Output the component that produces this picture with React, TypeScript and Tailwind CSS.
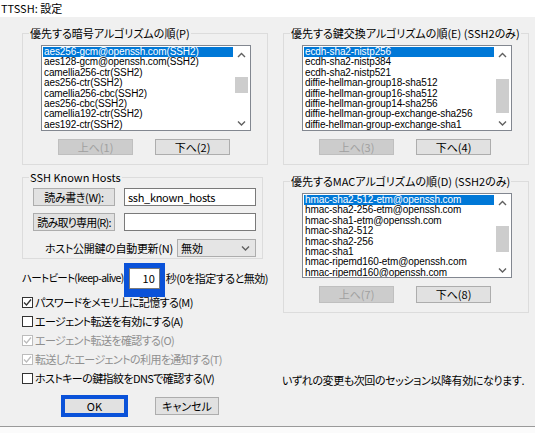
import type { ReactNode } from "react"
import clsx from "clsx"

const ciphers = [
  "aes256-gcm@openssh.com(SSH2)",
  "aes128-gcm@openssh.com(SSH2)",
  "camellia256-ctr(SSH2)",
  "aes256-ctr(SSH2)",
  "camellia256-cbc(SSH2)",
  "aes256-cbc(SSH2)",
  "camellia192-ctr(SSH2)",
  "aes192-ctr(SSH2)",
]

const kexes = [
  "ecdh-sha2-nistp256",
  "ecdh-sha2-nistp384",
  "ecdh-sha2-nistp521",
  "diffie-hellman-group18-sha512",
  "diffie-hellman-group16-sha512",
  "diffie-hellman-group14-sha256",
  "diffie-hellman-group-exchange-sha256",
  "diffie-hellman-group-exchange-sha1",
]

const macs = [
  "hmac-sha2-512-etm@openssh.com",
  "hmac-sha2-256-etm@openssh.com",
  "hmac-sha1-etm@openssh.com",
  "hmac-sha2-512",
  "hmac-sha2-256",
  "hmac-sha1",
  "hmac-ripemd160-etm@openssh.com",
  "hmac-ripemd160@openssh.com",
]

// Windows group box: border with the caption sitting on the top line.
function Group({ label, className, children }: { label: string; className?: string; children: ReactNode }) {
  return (
    <fieldset className={clsx("border border-[#dcdcdc]", className)}>
      <legend className="ml-[6px] px-[1px] text-[11px] leading-[12px] whitespace-nowrap">{label}</legend>
      {children}
    </fieldset>
  )
}

function Chevron({ down }: { down?: boolean }) {
  return (
    <svg width="9" height="6" viewBox="0 0 9 6" className="block">
      <polyline
        points={down ? "1,1.5 4.5,5 8,1.5" : "1,5 4.5,1.5 8,5"}
        fill="none"
        stroke="#606060"
        strokeWidth="1.4"
      />
    </svg>
  )
}

function ListBox({ items, className, thumbTop, thumbH }: { items: string[]; className: string; thumbTop: number; thumbH: number }) {
  return (
    <div className={clsx("flex w-[210px] border border-[#828790] bg-white", className)}>
      <div className="flex-1 overflow-hidden pt-[1px] pl-[1px] font-['Liberation_Sans',sans-serif] text-[10px] tracking-[-0.1px]">
        {items.map((it, i) => (
          <div
            key={it}
            className={clsx(
              "h-[10.4px] leading-[10.4px] pl-[1px] whitespace-nowrap",
              i === 0 ? "bg-[#0078d7] text-white" : "text-black",
            )}
          >
            {it}
          </div>
        ))}
      </div>
      <div className="w-[17px] flex flex-col items-center">
        <div className="h-[17px] flex items-center justify-center">
          <Chevron />
        </div>
        <div className="flex-1 w-full px-[1px]">
          <div className="w-[13px] mx-auto bg-[#cdcdcd]" style={{ marginTop: thumbTop - 17, height: thumbH }} />
        </div>
        <div className="h-[15px] flex items-center justify-center">
          <Chevron down />
        </div>
      </div>
    </div>
  )
}

function Btn({ children, disabled, className }: { children: ReactNode; disabled?: boolean; className?: string }) {
  return (
    <div
      className={clsx(
        "flex items-center justify-center border text-[11px] leading-none whitespace-nowrap",
        disabled ? "bg-[#cccccc] border-[#bfbfbf] text-[#a0a0a0]" : "bg-[#e1e1e1] border-[#adadad] text-black",
        className,
      )}
    >
      {children}
    </div>
  )
}

function Check({ label, checked, disabled }: { label: string; checked?: boolean; disabled?: boolean }) {
  const c = disabled ? "#bcbcbc" : "#333333"
  return (
    <div className="h-[19px] flex items-center">
      <div
        className={clsx(
          "w-[11px] h-[11px] border bg-white flex items-center justify-center",
          disabled ? "border-[#bcbcbc]" : "border-[#333333]",
        )}
      >
        {checked && (
          <svg width="9" height="9" viewBox="0 0 9 9" className="block">
            <polyline points="1,4.5 3.5,7 8,1.5" fill="none" stroke={c} strokeWidth="1.3" />
          </svg>
        )}
      </div>
      <span
        className={clsx(
          "ml-[2px] text-[11px] leading-none tracking-[-0.6px] whitespace-nowrap",
          disabled ? "text-[#8f8f8f]" : "text-black",
        )}
      >
        {label}
      </span>
    </div>
  )
}

function AlgoGroup({
  label,
  items,
  up,
  down,
  listH,
  btnH,
  thumbTop,
  thumbH,
  className,
}: {
  label: string
  items: string[]
  up: string
  down: string
  listH: string
  btnH: string
  thumbTop: number
  thumbH: number
  className?: string
}) {
  return (
    <Group label={label} className={className}>
      <div className="pl-[18px] pt-[6px] pb-[9px]">
        <ListBox items={items} className={listH} thumbTop={thumbTop} thumbH={thumbH} />
        <div className="flex gap-[22px] ml-[17px] mt-[8px]">
          <Btn disabled className={clsx("w-[75px]", btnH)}>{up}</Btn>
          <Btn className={clsx("w-[75px]", btnH)}>{down}</Btn>
        </div>
      </div>
    </Group>
  )
}

export default function App() {
  return (
    <div className="w-[535px] h-[433px] flex flex-col overflow-hidden bg-[#fbfbfb] text-black font-['Noto_Sans_CJK_JP',sans-serif] [font-feature-settings:'palt']">
      <div className="h-[17px] bg-white pl-[1px] text-[11px] leading-[17px]">TTSSH: 設定</div>

      <div className="h-[410px] bg-[#f0f0f0] border-b border-[#9a9a9a] flex pl-[22px] pt-[10px]">
        {/* left column */}
        <div className="w-[246px] flex flex-col">
          <AlgoGroup
            label="優先する暗号アルゴリズムの順(P)"
            items={ciphers}
            up="上へ(1)"
            down="下へ(2)"
            listH="h-[86px]"
            btnH="h-[16px]"
            thumbTop={31}
            thumbH={16}
          />

          <Group label="SSH Known Hosts" className="w-[241px] mt-[6px]">
            <div className="pl-[10px] pr-[6px] pt-[5px] pb-[1px] text-[11px]">
              <div className="flex gap-[9px] h-[18px]">
                <Btn className="w-[82px] tracking-[-0.4px]">読み書き(W):</Btn>
                <div className="flex-1 border border-[#7a7a7a] bg-white pl-[3px] flex items-center leading-none tracking-[-0.3px]">
                  ssh_known_hosts
                </div>
              </div>
              <div className="flex gap-[9px] h-[18px] mt-[7px]">
                <Btn className="w-[82px] tracking-[-0.8px]">読み取り専用(R):</Btn>
                <div className="flex-1 border border-[#7a7a7a] bg-white" />
              </div>
              <div className="flex items-center h-[18px] mt-[8px] pl-[12px]">
                <span className="leading-none tracking-[-0.3px] whitespace-nowrap">ホスト公開鍵の自動更新(N)</span>
                <div className="ml-auto w-[79px] h-full border border-[#adadad] bg-[#e5e5e5] flex items-center justify-between pl-[3px] pr-[5px] leading-none">
                  <span>無効</span>
                  <Chevron down />
                </div>
              </div>
            </div>
          </Group>

          <div className="flex items-center h-[21px] mt-[9px] text-[11px] leading-none whitespace-nowrap">
            <span className="w-[114px] text-[10.5px] tracking-[-0.7px]">ハートビート(keep-alive)</span>
            <div className="relative w-[33px] h-full border border-[#7a7a7a] bg-white flex items-center justify-end pr-[4px]">
              10
              {/* blue annotation frame */}
              <div className="absolute -left-[6px] -top-[6px] -right-[6px] -bottom-[9px] border-[5px] border-b-[8px] border-[#0a52d9]" />
            </div>
            <span className="ml-[6px] tracking-[-0.5px]">秒(0を指定すると無効)</span>
          </div>

          <div className="mt-[4px] flex flex-col">
            <Check label="パスワードをメモリ上に記憶する(M)" checked />
            <Check label="エージェント転送を有効にする(A)" />
            <Check label="エージェント転送を確認する(O)" checked disabled />
            <Check label="転送したエージェントの利用を通知する(T)" checked disabled />
            <Check label="ホストキーの鍵指紋をDNSで確認する(V)" />
          </div>

          <div className="flex mt-[9px] pl-[41px]">
            <div className="relative">
              <Btn className="w-[63px] h-[18px]">OK</Btn>
              <div className="absolute -inset-[2px] border-[4px] border-[#0a52d9]" />
            </div>
            <Btn className="w-[64px] h-[18px] ml-[29px]">キャンセル</Btn>
          </div>
        </div>

        {/* right column */}
        <div className="w-[246px] ml-[15px] flex flex-col">
          <AlgoGroup
            label="優先する鍵交換アルゴリズムの順(E) (SSH2のみ)"
            items={kexes}
            up="上へ(3)"
            down="下へ(4)"
            listH="h-[86px]"
            btnH="h-[16px]"
            thumbTop={33}
            thumbH={34}
          />
          <AlgoGroup
            label="優先するMACアルゴリズムの順(D) (SSH2のみ)"
            items={macs}
            up="上へ(7)"
            down="下へ(8)"
            listH="h-[85px]"
            btnH="h-[17px]"
            thumbTop={32}
            thumbH={26}
            className="mt-[10px]"
          />
          <div className="mt-[60px] -ml-[1px] text-[11px] leading-[14px] tracking-[-0.4px] whitespace-nowrap">
            いずれの変更も次回のセッション以降有効になります.
          </div>
        </div>
      </div>
    </div>
  )
}
